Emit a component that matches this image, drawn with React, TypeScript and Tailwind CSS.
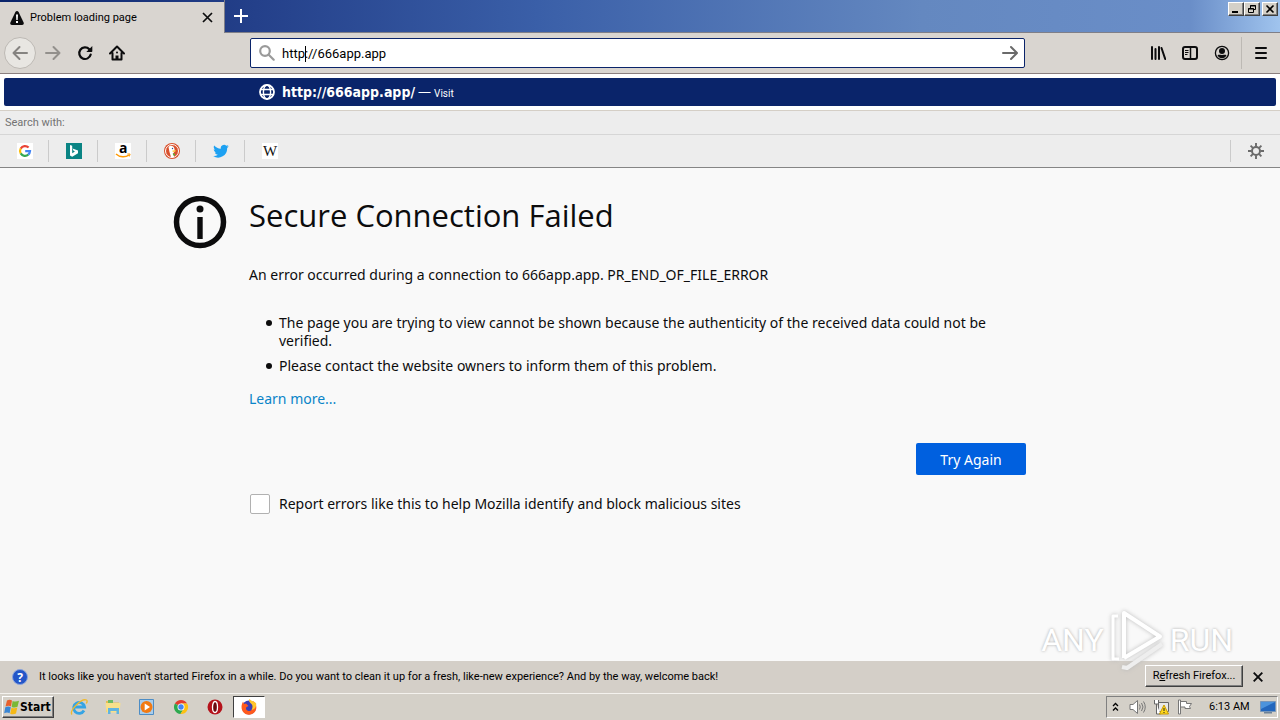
import type { ReactNode } from "react"
import clsx from "clsx"

const bevel =
  "border border-t-white border-l-white border-r-[#404040] border-b-[#404040] shadow-[inset_-1px_-1px_0_#808080]"

const IconButton = ({
  label,
  className,
  children,
}: {
  label: string
  className?: string
  children: ReactNode
}) => (
  <button
    type="button"
    aria-label={label}
    className={clsx("flex size-8 shrink-0 items-center justify-center", className)}
  >
    {children}
  </button>
)

const TitleBar = () => (
  <header className="flex h-[33px] items-start bg-[linear-gradient(90deg,#0a246a_0%,#24408a_20%,#3a5fa8_42%,#6488c0_72%,#6a8ec8_93%,#a0c4ee_100%)]">
    <div className="mt-[2px] flex h-[31px] w-[224px] items-center bg-[#d9d5d0] pr-[8px] pl-[9px]">
      <svg width="16" height="16" viewBox="0 0 16 16" aria-hidden="true">
        <path
          d="M6.400 1.900C7.100.6 8.900.6 9.600 1.900l5 10.600c.6 1.300-.2 2.500-1.600 2.500H3c-1.400 0-2.200-1.200-1.600-2.500z"
          fill="#0c0c0d"
        />
        <path d="M7 4.500h2L8.700 10H7.300zM7 11h2v2H7z" fill="#fff" />
      </svg>
      <span className="ml-[5px] flex-1 pt-px text-[11px]">Problem loading page</span>
      <button type="button" aria-label="Close tab" className="p-[3px]">
        <svg width="11" height="11" viewBox="0 0 11 11" fill="none" stroke="#0c0c0d" strokeWidth="1.700">
          <path d="M1 1l9 9M10 1l-9 9" />
        </svg>
      </button>
    </div>
    <div className="h-full flex-1 border-b border-l border-[#7f7f88]">
      <IconButton label="New tab">
        <svg width="14" height="14" viewBox="0 0 14 14" stroke="#fff" strokeWidth="2">
          <path d="M7 0v14M0 7h14" />
        </svg>
      </IconButton>
    </div>
    <div className="flex h-full items-start border-b border-[#7f7f88] pt-[2px] pr-[2px]">
      <button type="button" aria-label="Minimize" className={clsx("flex h-[14px] w-4 items-center justify-center bg-[#d4d0c8]", bevel)}>
        <svg width="10" height="10" viewBox="0 0 10 10">
          <path d="M1 7h6v2H1z" />
        </svg>
      </button>
      <button type="button" aria-label="Restore" className={clsx("flex h-[14px] w-4 items-center justify-center bg-[#d4d0c8]", bevel)}>
        <svg width="10" height="10" viewBox="0 0 10 10" fill="none" stroke="#000">
          <path d="M3.500 4V1.500h5v4H7M3 2h6M1.500 4.500h5v4h-5zM1 5h6" />
        </svg>
      </button>
      <button type="button" aria-label="Close" className={clsx("ml-[2px] flex h-[14px] w-4 items-center justify-center bg-[#d4d0c8]", bevel)}>
        <svg width="10" height="10" viewBox="0 0 10 10" stroke="#000" strokeWidth="1.600">
          <path d="M1.500 1.500l7 7M8.500 1.500l-7 7" />
        </svg>
      </button>
    </div>
  </header>
)

const Toolbar = () => (
  <nav className="flex h-[41px] items-center border-b border-[#8a7f7f] bg-[#d9d5d0]">
    <div className="flex w-[250px] items-center pl-1">
      <IconButton label="Back" className="rounded-full border border-[#bdb9b4] bg-[#e8e6e2]">
        <svg width="16" height="16" viewBox="0 0 16 16" fill="none" stroke="#858380" strokeWidth="2" strokeLinecap="round" strokeLinejoin="round">
          <path d="M15 8H1.500M7.500 2l-6 6 6 6" />
        </svg>
      </IconButton>
      <IconButton label="Forward" className="ml-px">
        <svg width="16" height="16" viewBox="0 0 16 16" fill="none" stroke="#93908c" strokeWidth="2" strokeLinecap="round" strokeLinejoin="round">
          <path d="M1 8h13.500M8.500 2l6 6-6 6" />
        </svg>
      </IconButton>
      <IconButton label="Reload">
        <svg width="16" height="16" viewBox="0 0 16 16">
          <path d="M12.300 4.200A5.800 5.800 0 1 0 13.700 9.500" fill="none" stroke="#0c0c0d" strokeWidth="2.200" strokeLinecap="round" />
          <path d="M15.300 1v5.300a.7.7 0 0 1-.7.7H9.300z" fill="#0c0c0d" />
        </svg>
      </IconButton>
      <IconButton label="Home">
        <svg width="16" height="16" viewBox="0 0 16 16" fill="none" stroke="#0c0c0d" strokeWidth="2" strokeLinecap="round" strokeLinejoin="round">
          <path d="M1 8.500l7-7 7 7M3.500 8v6.500h9V8" />
          <path d="M8 14v-3.500" strokeWidth="3" strokeLinecap="butt" />
          <path d="M8 7.500v.1" />
        </svg>
      </IconButton>
    </div>
    <div className="relative flex h-[30px] flex-1 items-center rounded-[2px] border border-[#0a246a] bg-white pr-[6px] pl-2">
      <svg width="16" height="16" viewBox="0 0 16 16" fill="none" stroke="#9a9a9a" strokeWidth="2.200" strokeLinecap="round">
        <circle cx="6" cy="6" r="4.800" />
        <path d="M9.700 9.700l5 5" />
      </svg>
      <input
        type="text"
        aria-label="Search or enter address"
        defaultValue="http://666app.app"
        className="ml-[7px] min-w-0 flex-1 bg-transparent pt-px text-[13px] outline-none"
      />
      <span className="absolute top-[7px] left-[54px] h-4 w-px bg-black" />
      <button type="button" aria-label="Go">
        <svg width="16" height="16" viewBox="0 0 16 16" fill="none" stroke="#6a6a6a" strokeWidth="2" strokeLinecap="round" strokeLinejoin="round">
          <path d="M1 8h13.500M9 2l6 6-6 6" />
        </svg>
      </button>
    </div>
    <div className="flex h-full w-[255px] items-center justify-end pr-[3px]">
      <IconButton label="Library">
        <svg width="16" height="16" viewBox="0 0 16 16" fill="none" stroke="#0c0c0d" strokeWidth="2" strokeLinecap="round">
          <path d="M2 2v12M5.500 4v10M9 2v12M11.500 3l3.700 11" />
        </svg>
      </IconButton>
      <IconButton label="Sidebars">
        <svg width="16" height="16" viewBox="0 0 16 16" fill="none" stroke="#0c0c0d" strokeWidth="2">
          <rect x="1" y="2" width="14" height="12" rx="2" />
          <path d="M8.500 2v12" strokeWidth="1.500" />
          <path d="M3 5.500h3.500M3 7.500h3.500M3 9.500h2.500" strokeWidth="1" />
        </svg>
      </IconButton>
      <IconButton label="Account">
        <svg width="16" height="16" viewBox="0 0 16 16" fill="#0c0c0d">
          <circle cx="8" cy="8" r="6.600" fill="none" stroke="#0c0c0d" strokeWidth="1.300" />
          <circle cx="8" cy="6" r="3" />
          <path d="M3.500 10.200c1.400-.6 2.200-.2 4.500-.2s3.100-.4 4.500.2C11.700 12.300 10 13.200 8 13.200s-3.700-.9-4.500-3z" />
        </svg>
      </IconButton>
      <span className="mr-[3px] ml-[3px] h-8 w-px bg-[#bdb9b4]" />
      <IconButton label="Open menu">
        <svg width="16" height="16" viewBox="0 0 16 16" stroke="#0c0c0d" strokeWidth="2" strokeLinecap="round">
          <path d="M3 3h10M3 8h10M3 13h10" />
        </svg>
      </IconButton>
    </div>
  </nav>
)

const engines: { name: string; icon: ReactNode }[] = [
  {
    name: "Google",
    icon: (
      <svg width="16" height="16" viewBox="0 0 16 16" fill="none" strokeWidth="2.200">
        <path fill="#fff" d="M0 0h16v16H0z" />
        <path d="M11.600 4.600A5 5 0 0 0 3.700 5.600" stroke="#ea4335" />
        <path d="M3.700 5.500a5 5 0 0 0 0 5" stroke="#fbbc05" />
        <path d="M3.700 10.400a5 5 0 0 0 7.700 1.100" stroke="#34a853" />
        <path d="M11.300 11.600A5 5 0 0 0 13 8.200H8.200" stroke="#4285f4" />
      </svg>
    ),
  },
  {
    name: "Bing",
    icon: (
      <svg width="16" height="16" viewBox="0 0 16 16">
        <path fill="#0a8484" d="M0 0h16v16H0z" />
        <path fill="#fff" d="M4 2l2.200.8v7.400l2.800-1.700-1.500-.7-.9-2.200 5.400 1.900v2.700L6.200 13.700 4 12.400z" />
      </svg>
    ),
  },
  {
    name: "Amazon",
    icon: (
      <svg width="16" height="16" viewBox="0 0 16 16" fill="none" overflow="visible">
        <path fill="#fff" d="M0 0h16v16H0z" />
        <text x="4" y="9.500" fontSize="14" fontWeight="700" fontFamily="Open Sans, sans-serif" fill="#000">a</text>
        <path d="M1 11c4 3.600 9.500 3.600 13 1" stroke="#f90" strokeWidth="1.500" />
        <path d="M12.300 11h2.800l-.8 2.500" stroke="#f90" />
      </svg>
    ),
  },
  {
    name: "DuckDuckGo",
    icon: (
      <svg width="16" height="16" viewBox="0 0 16 16">
        <circle cx="8" cy="8" r="8" fill="#d9502c" />
        <circle cx="8" cy="8" r="6.500" fill="none" stroke="#fff" strokeWidth="1" />
        <path d="M4.500 4c1.500-2 5.500-1.500 6 2l.2 2.500L9 10.500l1.300 3.400-3.300.2L5.500 9z" fill="#fff" />
        <path d="M8.500 7.500l3.500-.2-.5 1.200-2.800.5z" fill="#fc3" />
        <path d="M8.700 10.500l2.300.3-.3 2-1.500-.5z" fill="#4cba3c" />
        <circle cx="8.500" cy="5.500" r=".7" fill="#2d4f8e" />
      </svg>
    ),
  },
  {
    name: "Twitter",
    icon: (
      <svg width="16" height="16" viewBox="0 0 24 24">
        <path
          fill="#1da1f2"
          d="M23.600 4.900c-.8.400-1.700.6-2.700.8 1-.6 1.700-1.500 2.100-2.600-.9.500-1.900.9-3 1.100a4.800 4.800 0 0 0-8.200 4.400C7.800 8.400 4.200 6.500 1.800 3.600c-1.300 2.200-.7 5 1.500 6.400-.8 0-1.500-.2-2.200-.6 0 2.300 1.600 4.400 3.800 4.800-.7.200-1.400.2-2.100.1.600 1.900 2.400 3.300 4.500 3.300A9.500 9.500 0 0 1 .3 19.600a13.500 13.500 0 0 0 20.900-12c.9-.7 1.700-1.600 2.400-2.700z"
        />
      </svg>
    ),
  },
  {
    name: "Wikipedia",
    icon: (
      <svg width="16" height="16" viewBox="0 0 16 16">
        <path fill="#fff" d="M0 0h16v16H0z" />
        <text x="8" y="13" textAnchor="middle" fontSize="15" fontFamily="Liberation Serif, serif" fill="#111">W</text>
      </svg>
    ),
  },
]

const UrlResults = () => (
  <section className="border-b border-[#858585] bg-white">
    <div className="p-1">
      <a href="#visit" className="flex h-7 items-center rounded-[2px] bg-[#0a246a] pl-[255px] text-white">
        <svg width="16" height="16" viewBox="0 0 16 16" fill="none" stroke="#fff" strokeWidth="1.400">
          <circle cx="8" cy="8" r="7" strokeWidth="1.800" />
          <ellipse cx="8" cy="8" rx="3.600" ry="7" />
          <path d="M1.500 5.500h13M1.500 10.500h13" />
        </svg>
        <span className="ml-[7px] font-['DejaVu_Sans_Condensed','DejaVu_Sans',sans-serif] text-[14px] font-bold">http://666app.app/</span>
        <span className="ml-[3px] font-['Open_Sans',sans-serif] text-[13px]">—</span>
        <span className="ml-[3px] pt-[2px] text-[10px]">Visit</span>
      </a>
    </div>
    <div className="flex h-[25px] items-center border-t border-b border-t-[#d5cfc6] border-b-[#d6d6d6] bg-[#ededed] pt-[2px] pl-[5px] text-[11px] text-[#737373]">
      Search with:
    </div>
    <div className="flex h-8 items-center bg-[#ededed]">
      {engines.map((engine) => (
        <button
          key={engine.name}
          type="button"
          aria-label={engine.name}
          className="flex h-[22px] w-[49px] items-center justify-center border-r border-[#cbcbcb] pl-[2px] nth-[6]:border-r-transparent"
        >
          {engine.icon}
        </button>
      ))}
      <div className="ml-auto flex h-[22px] w-[50px] items-center justify-center border-l border-[#cbcbcb]">
        <button type="button" aria-label="Change search settings">
          <svg width="16" height="16" viewBox="0 0 16 16" fill="none" stroke="#6b6b6b" strokeWidth="2">
            <circle cx="8" cy="8" r="4" />
            <path d="M8 0v3.500M8 12.500V16M0 8h3.500M12.500 8H16M2.600 2.600l2.200 2.200M11.200 11.200l2.200 2.200M13.400 2.600l-2.200 2.200M4.800 11.200l-2.200 2.200" strokeWidth="1.900" />
          </svg>
        </button>
      </div>
    </div>
  </section>
)

const Watermark = () => (
  <div
    aria-hidden="true"
    className="pointer-events-none absolute right-[47px] -bottom-3 flex h-[66px] items-center gap-[5px] font-[Roboto,sans-serif] text-[32px] leading-none text-white [text-shadow:0_0_3px_#aaa]"
  >
    <span>ANY</span>
    <svg width="56" height="66" viewBox="0 0 56 66" fill="none" strokeLinejoin="round" className="drop-shadow-[0_0_2px_#bbb]">
      <path d="M15 51V6l36 23.500L15 51" stroke="#fff" strokeWidth="4" />
      <path d="M9 9H4v43h6" stroke="#fff" strokeWidth="3" />
      <path d="M13 60l5 1 35-24" stroke="#eee" strokeWidth="4" />
    </svg>
    <span>RUN</span>
  </div>
)

const reasons = [
  "The page you are trying to view cannot be shown because the authenticity of the received data could not be verified.",
  "Please contact the website owners to inform them of this problem.",
]

const ErrorPage = () => (
  <main className="relative flex-1 bg-[#f9f9f9] px-4 pt-7 font-['Noto_Sans',sans-serif] text-[14px] leading-[18px] text-[#0c0c0d]">
    <div className="mx-auto max-w-[782px]">
      <div className="-ml-[76px] flex items-start">
        <svg width="54" height="54" viewBox="0 0 54 54" className="shrink-0">
          <circle cx="27" cy="26" r="23.500" fill="none" stroke="#0c0c0d" strokeWidth="5.500" />
          <circle cx="27" cy="13" r="3.500" fill="#0c0c0d" />
          <path d="M24.300 21h5.400v22h-5.400z" fill="#0c0c0d" />
        </svg>
        <h1 className="ml-[22px] font-['Open_Sans',sans-serif] text-[31px] leading-[38px]">Secure Connection Failed</h1>
      </div>
      <p className="mt-4">An error occurred during a connection to 666app.app. PR_END_OF_FILE_ERROR</p>
      <ul className="mt-[30px] space-y-[7px] pr-9 pl-[17px]">
        {reasons.map((reason) => (
          <li key={reason} className="flex gap-[7px]">
            <span className="mt-[6px] size-[6px] shrink-0 rounded-full bg-[#0c0c0d]" />
            {reason}
          </li>
        ))}
      </ul>
      <a href="#learn-more" className="mt-[15px] block w-fit text-[#0a84c8]">
        Learn more...
      </a>
      <div className="mt-[35px] flex justify-end pr-[5px]">
        <button type="button" className="h-8 w-[110px] rounded-[2px] bg-[#0060df] pt-[2px] text-white">
          Try Again
        </button>
      </div>
      <label className="mt-[19px] flex w-fit items-center gap-[9px]">
        <input type="checkbox" className="ml-px size-5 appearance-none rounded-[2px] border border-[#b1b1b1] bg-white" />
        Report errors like this to help Mozilla identify and block malicious sites
      </label>
    </div>
    <Watermark />
  </main>
)

const Notification = () => (
  <aside className="flex h-8 items-center bg-[#d4cfc8] pr-[17px] pl-3 text-[11px]">
    <svg width="16" height="16" viewBox="0 0 16 16">
      <circle cx="8" cy="8" r="7.500" fill="#2456c8" stroke="#8aa4dc" />
      <text x="8" y="12.500" textAnchor="middle" fontSize="12" fontWeight="700" fontFamily="Noto Sans, sans-serif" fill="#fff">?</text>
    </svg>
    <p className="ml-[11px] flex-1 pt-px">
      It looks like you haven't started Firefox in a while. Do you want to clean it up for a fresh, like-new experience?
      And by the way, welcome back!
    </p>
    <button type="button" className={clsx("mr-[10px] mb-[2px] h-[22px] w-[98px] whitespace-nowrap", bevel)}>
      R<u>e</u>fresh Firefox...
    </button>
    <button type="button" aria-label="Dismiss">
      <svg width="10" height="10" viewBox="0 0 10 10" stroke="#0c0c0d" strokeWidth="1.900">
        <path d="M.7.700l8.600 8.600M9.300.700L.700 9.300" />
      </svg>
    </button>
  </aside>
)

const WindowsFlag = () => (
  <svg width="16" height="16" viewBox="0 0 16 16" className="shrink-0">
    <path d="M3 1.500c2-1 3.500-.8 5 0L7 7.500c-1.500-.8-3-.9-5.500 0z" fill="#e8602c" />
    <path d="M8.600 2c1.800.8 4 .8 6.400-.2l-1.500 6c-1.900.9-4 .9-5.800.1z" fill="#7ab837" />
    <path d="M1.300 8.200c2-.9 4-.8 5.500 0l-1.200 6c-1.500-.8-3.300-.9-5.400 0z" fill="#3a86d4" />
    <path d="M7.500 8.700c1.800.8 3.800.8 5.800-.1l-1.300 6c-1.900.9-4 .9-5.800.1z" fill="#f5b916" />
  </svg>
)

const pinned: { name: string; active?: boolean; icon: ReactNode }[] = [
  {
    name: "Internet Explorer",
    icon: (
      <svg width="18" height="18" viewBox="0 0 18 18" fill="none">
        <path d="M14 12.500A5.500 5.500 0 1 1 14.600 9H4.500" stroke="#35a4e4" strokeWidth="2.800" />
        <path d="M2 16.500C-1 13 11 0 16.500 2c1 .5.700 2-.2 3.500" stroke="#f0b92c" strokeWidth="1.300" />
      </svg>
    ),
  },
  {
    name: "Windows Explorer",
    icon: (
      <svg width="18" height="18" viewBox="0 0 18 18">
        <path d="M2 3h5l1 1.500h7V14H2z" fill="#e6bd55" />
        <path d="M4 2h5v4H4z" fill="#6dbb63" />
        <path d="M1.500 5h15l-1 9.500h-13z" fill="#f8e08a" />
        <path d="M4 10h11v6h-2.500v-3h-6v3H4z" fill="#61b4e0" />
      </svg>
    ),
  },
  {
    name: "Media Player",
    icon: (
      <svg width="18" height="18" viewBox="0 0 18 18">
        <path d="M1.500 1.500h14v15h-14z" fill="#a9cdeb" stroke="#4d8dc5" />
        <circle cx="8.500" cy="9" r="6" fill="#f27a12" />
        <path d="M6.700 5.500L12 9l-5.300 3.500z" fill="#fff" />
      </svg>
    ),
  },
  {
    name: "Chrome",
    icon: (
      <svg width="18" height="18" viewBox="0 0 18 18">
        <path d="M9 9L2.900 5.500A7 7 0 0 1 15.100 5.500L9 5.500z" fill="#e33b2e" />
        <path d="M9 9L2.900 5.500A7 7 0 0 0 8.500 16L12 10.500z" fill="#2da94f" />
        <path d="M9 5.500h6.100A7 7 0 0 1 8.500 16L12 10z" fill="#fdc113" />
        <circle cx="9" cy="9" r="3.500" fill="#fff" />
        <circle cx="9" cy="9" r="2.700" fill="#4285f4" />
      </svg>
    ),
  },
  {
    name: "Opera",
    icon: (
      <svg width="18" height="18" viewBox="0 0 18 18">
        <circle cx="9" cy="9" r="7.500" fill="#b5121b" />
        <ellipse cx="9" cy="9" rx="2.500" ry="5.500" fill="#6b0a10" stroke="#fff" strokeWidth="1.300" />
      </svg>
    ),
  },
  {
    name: "Firefox",
    active: true,
    icon: (
      <svg width="18" height="18" viewBox="0 0 18 18">
        <circle cx="9" cy="9.500" r="7" fill="#3a3fb8" />
        <path d="M2 6c-1.800 6 2 10.700 7 10.700 5 0 8.500-4.500 7-9.700-.5-2-2-3.500-3-4 1 3 1 4-.5 4.500 1 4-1.500 6-4 5.500-2.500-.5-3-2.500-2-4L8.500 8 6 5.500 4 6 3 3.500z" fill="#ff5a1c" />
        <path d="M9.500 1c-1.500 2 .5 3.500 2 5s1.500 4 0 6c3-.5 5-3 4.700-6.500-1.200-2-4.700-2-6.700-4.500z" fill="#ffc62b" />
      </svg>
    ),
  },
]

const Taskbar = () => (
  <footer className="flex h-[27px] items-center border-t border-[#f4f2ee] bg-[#d4d0c8] text-[11px]">
    <button
      type="button"
      className={clsx(
        "ml-[2px] flex h-[22px] w-[52px] items-center pl-px font-['DejaVu_Sans_Condensed','DejaVu_Sans',sans-serif] text-[12px] font-bold",
        bevel,
      )}
    >
      <WindowsFlag />
      Start
    </button>
    <div className="ml-[9px] flex items-center">
      {pinned.map((app) => (
        <button
          key={app.name}
          type="button"
          aria-label={app.name}
          className={clsx(
            "mr-[2px] flex h-[22px] w-8 items-center justify-center",
            app.active && "border border-t-[#404040] border-r-white border-b-white border-l-[#404040] bg-white",
          )}
        >
          {app.icon}
        </button>
      ))}
    </div>
    <div className="mr-[2px] ml-auto flex h-[22px] w-[172px] items-center border border-t-[#808080] border-r-white border-b-white border-l-[#808080] pr-px pl-[5px]">
      <svg width="7" height="10" viewBox="0 0 7 10" fill="none" stroke="#000" strokeWidth="1.300">
        <path d="M1 4l2.500-2.500L6 4M1 8.500L3.500 6 6 8.500" />
      </svg>
      <svg width="17" height="16" viewBox="0 0 17 16" fill="none" stroke="#777" className="ml-[10px]">
        <path d="M1 5.500h3L8.500 1.500v13L4 10.500H1z" fill="#fff" />
        <path d="M10.500 5.500q1.500 2.500 0 5M12.500 4q3 4 0 8M14.500 2.500q3.500 5.500 0 11" />
      </svg>
      <svg width="16" height="16" viewBox="0 0 16 16" fill="none" stroke="#666" className="ml-[7px]">
        <path d="M5.500 3.500h10v9h-10z" fill="#e8e8e8" />
        <path d="M1.500 1v4h4V1M3.500 5v10h4" fill="#fff" />
        <path d="M11 6l4.500 9h-9z" fill="#ffd91c" stroke="#c99a00" />
        <path d="M11 9v3M11 13v1" stroke="#222" />
      </svg>
      <svg width="16" height="16" viewBox="0 0 16 16" fill="#fff" stroke="#777" className="ml-2">
        <path d="M1.500 1v14h2V1zM3.500 2.500h6v2h5l-2 3 1 2H8V8H3.500z" />
      </svg>
      <time className="ml-4 pt-px whitespace-nowrap">6:13 AM</time>
      <svg width="16" height="16" viewBox="0 0 16 16" className="ml-auto">
        <path d="M.5 2.500h15v10H.5z" fill="#2367bd" stroke="#7896b8" />
        <path d="M1 3h14L1 10z" fill="#4b93dc" />
        <path d="M4 13h8v1.500H4z" fill="#6d8298" />
      </svg>
    </div>
  </footer>
)

const App = () => (
  <div className="flex min-h-screen flex-col overflow-x-hidden bg-[#f9f9f9] font-[Roboto,sans-serif] text-black">
    <TitleBar />
    <Toolbar />
    <UrlResults />
    <ErrorPage />
    <Notification />
    <Taskbar />
  </div>
)

export default App
